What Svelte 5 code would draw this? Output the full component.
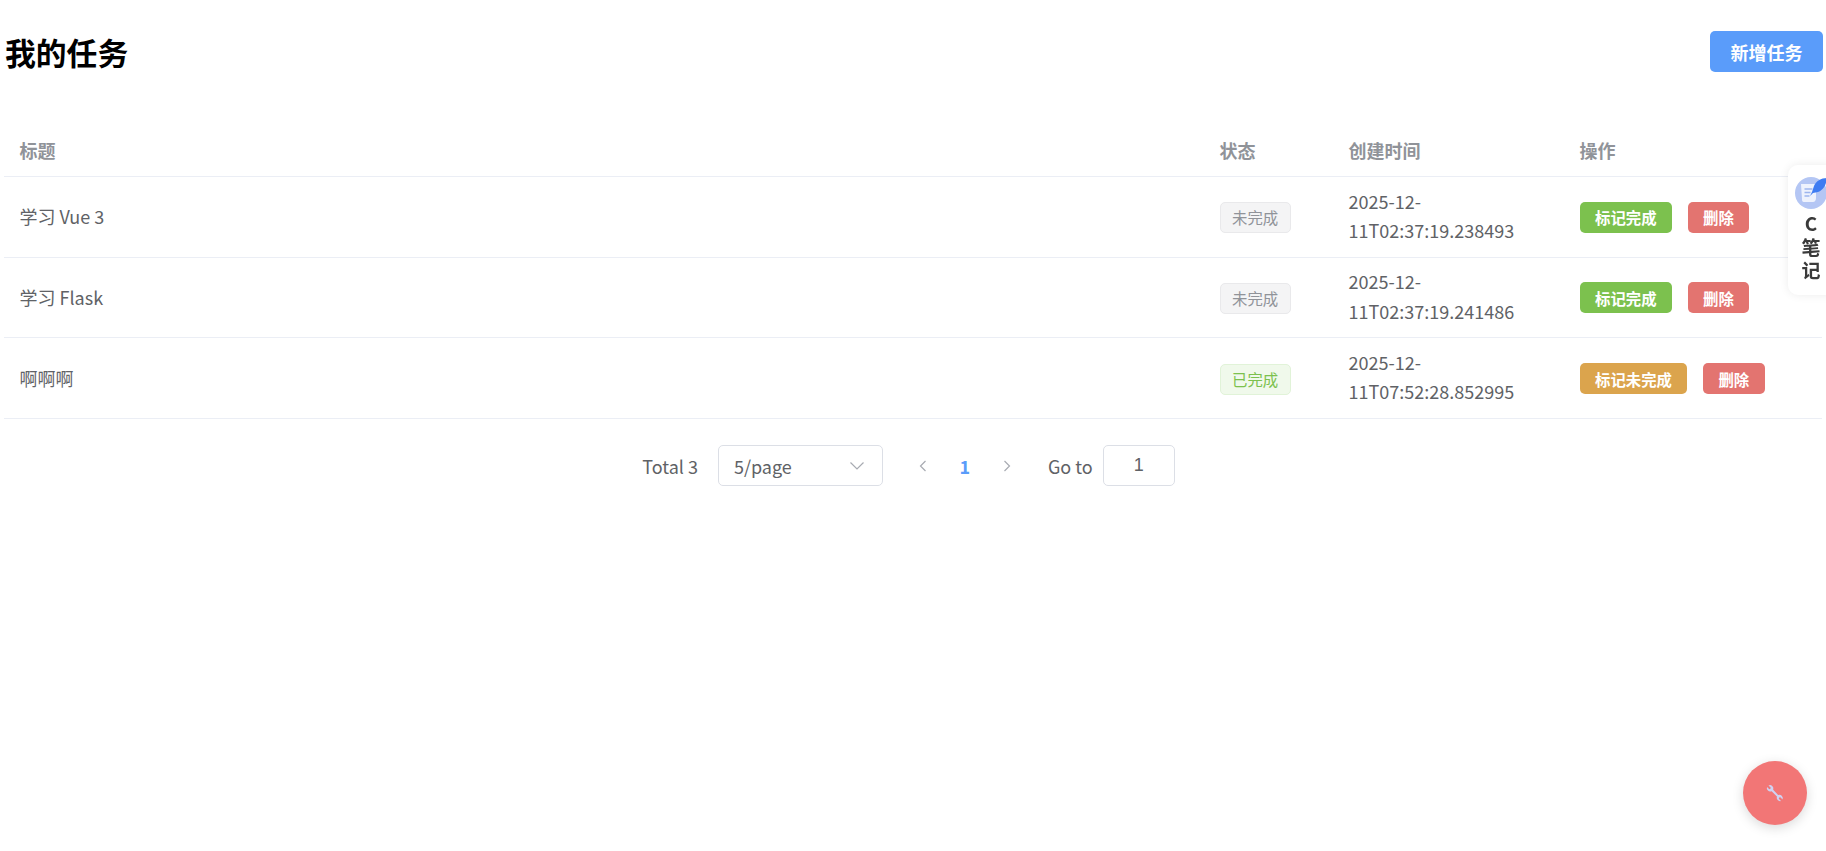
<script>
	const tasks = [
		{ title: '学习 Vue 3', done: false, created: '2025-12-11T02:37:19.238493' },
		{ title: '学习 Flask', done: false, created: '2025-12-11T02:37:19.241486' },
		{ title: '啊啊啊', done: true, created: '2025-12-11T07:52:28.852995' }
	];
</script>

<div class="page">
	<header class="head">
		<h2>我的任务</h2>
		<button class="btn add">新增任务</button>
	</header>

	<table class="tasks">
		<colgroup>
			<col />
			<col class="c-state" />
			<col class="c-time" />
			<col class="c-ops" />
		</colgroup>
		<thead>
			<tr>
				<th>标题</th>
				<th>状态</th>
				<th>创建时间</th>
				<th>操作</th>
			</tr>
		</thead>
		<tbody>
			{#each tasks as task}
				<tr>
					<td>{task.title}</td>
					<td>
						<span class="tag" class:ok={task.done}>{task.done ? '已完成' : '未完成'}</span>
					</td>
					<td class="time">{task.created}</td>
					<td>
						<div class="ops">
							<button class="btn small" class:green={!task.done} class:orange={task.done}>
								{task.done ? '标记未完成' : '标记完成'}
							</button>
							<button class="btn small red">删除</button>
						</div>
					</td>
				</tr>
			{/each}
		</tbody>
	</table>

	<div class="pager">
		<span class="total">Total 3</span>
		<div class="select">
			<span>5/page</span>
			<svg width="18" height="18" viewBox="0 0 18 18"><path d="M2.500 5.500 9 12l6.500-6.500" /></svg>
		</div>
		<div class="pages">
			<svg class="arrow" width="14" height="14" viewBox="0 0 14 14"><path d="M9.500 2 4.500 7l5 5" /></svg>
			<span class="num">1</span>
			<svg class="arrow" width="14" height="14" viewBox="0 0 14 14"><path d="M4.500 2l5 5-5 5" /></svg>
		</div>
		<span class="goto">Go to</span>
		<input class="jump" value="1" />
	</div>
</div>

<aside class="side">
	<svg width="32" height="32" viewBox="0 0 32 32">
		<circle cx="16" cy="16" r="16" fill="#b4c6f4" />
		<path d="M6 7h15v14c0 2-1 4-3 4H9c-2 0-2-2-2-3z" fill="#eef2fd" />
		<path d="M9.500 12h8M9.500 15.500h6M9.500 19h5" stroke="#9db5ee" stroke-width="1.300" />
		<path d="M32 1c-6 0-11 3-13 8l-2 6-2 4 3-3 5-1c5-2 8-6 9-14z" fill="#3f7cf2" />
	</svg>
	<span>C</span>
	<span>笔</span>
	<span>记</span>
</aside>

<button class="fab" aria-label="工具">
	<svg width="18" height="18" viewBox="0 0 18 18">
		<path d="M2.500 1.500l2.300 2.200-.4 1.100-1.100.4L1 3a3.400 3.400 0 0 0 4.600 4.200l5.300 5.400A3.400 3.400 0 0 0 15 17l-2.200-2.300.4-1.100 1.100-.4 2.300 2.200a3.400 3.400 0 0 0-4.500-4.300L7.200 5.700A3.400 3.400 0 0 0 2.500 1.500z" fill="#cfd2f2" />
	</svg>
</button>

<style>
	:global(body) {
		background: #fff;
		font-family: 'Noto Sans CJK SC', 'Noto Sans', sans-serif;
	}

	.page {
		padding: 31px 4px 0 4px;
	}

	.head {
		display: flex;
		justify-content: space-between;
		align-items: center;
		margin-bottom: 54px;
	}

	h2 {
		margin: 0;
		padding-left: 1px;
		font-size: 30.800px;
		font-weight: 700;
		line-height: 41px;
		color: #000;
	}

	.btn {
		border: 0;
		border-radius: 5px;
		color: #fff;
		font-family: inherit;
		font-weight: 700;
	}

	.add {
		width: 113px;
		height: 41px;
		margin-right: -1px;
		background: #5a9cfa;
		font-size: 18px;
	}

	.small {
		height: 31px;
		padding: 0 15.500px;
		font-size: 15.400px;
	}

	.green {
		background: #7cc14e;
	}

	.orange {
		background: #dba44d;
	}

	.red {
		background: #e37470;
	}

	.tasks {
		width: 1818px;
		table-layout: fixed;
		border-collapse: collapse;
		font-size: 18px;
		color: #606266;
	}

	.c-state {
		width: 129px;
	}

	.c-time {
		width: 231px;
	}

	.c-ops {
		width: 258px;
	}

	th,
	td {
		padding: 10.330px 15.500px;
		border-bottom: 1px solid #ebeef5;
		text-align: left;
		line-height: 29.500px;
	}

	th {
		color: #909399;
		font-weight: 700;
	}

	td.time {
		padding-top: 9.500px;
		padding-bottom: 11.160px;
	}

	.tag {
		display: inline-block;
		box-sizing: border-box;
		height: 31px;
		padding: 0 11.500px;
		border: 1px solid #e9e9eb;
		border-radius: 5px;
		background: #f4f4f5;
		color: #909399;
		font-size: 15.400px;
		line-height: 29px;
		vertical-align: middle;
	}

	.tag.ok {
		border-color: #e1f3d8;
		background: #f0f9eb;
		color: #7cc14e;
	}

	.ops {
		display: flex;
		gap: 15.500px;
		margin-top: 0.500px;
	}

	.pager {
		display: flex;
		align-items: center;
		justify-content: center;
		height: 41px;
		margin-top: 26px;
		padding-right: 9px;
		font-size: 18px;
		color: #606266;
	}

	.select {
		display: flex;
		align-items: center;
		justify-content: space-between;
		box-sizing: border-box;
		width: 165px;
		height: 41px;
		margin-left: 20px;
		padding: 0 16px 0 15px;
		border: 1px solid #dcdfe6;
		border-radius: 5px;
	}

	.select path,
	.arrow path {
		fill: none;
		stroke: #a8abb2;
		stroke-width: 1.200;
	}

	.pages {
		display: flex;
		align-items: center;
		gap: 28px;
		margin: 0 34px 0 33px;
	}

	.num {
		width: 14px;
		text-align: center;
		color: #5a9cfa;
		font-weight: 700;
	}

	.jump {
		box-sizing: border-box;
		width: 72px;
		height: 41px;
		margin-left: 10px;
		border: 1px solid #dcdfe6;
		border-radius: 5px;
		outline: 0;
		color: #606266;
		font-family: 'Liberation Sans', sans-serif;
		font-size: 18px;
		text-align: center;
	}

	.side {
		position: fixed;
		top: 165px;
		right: -8px;
		display: flex;
		flex-direction: column;
		align-items: center;
		box-sizing: border-box;
		width: 46px;
		height: 130px;
		padding-top: 12px;
		border-radius: 10px 0 0 10px;
		background: #fff;
		box-shadow: 0 0 10px rgba(0, 0, 0, 0.08);
		color: #3a3a3a;
		font-size: 19px;
		font-weight: 700;
		line-height: 23.500px;
	}

	.side svg {
		margin-bottom: 2px;
	}

	.fab {
		position: fixed;
		right: 19px;
		bottom: 26px;
		display: flex;
		align-items: center;
		justify-content: center;
		width: 64px;
		height: 64px;
		padding: 0;
		border: 0;
		border-radius: 50%;
		background: #f27676;
		box-shadow: 0 3px 12px rgba(0, 0, 0, 0.15);
	}
</style>
